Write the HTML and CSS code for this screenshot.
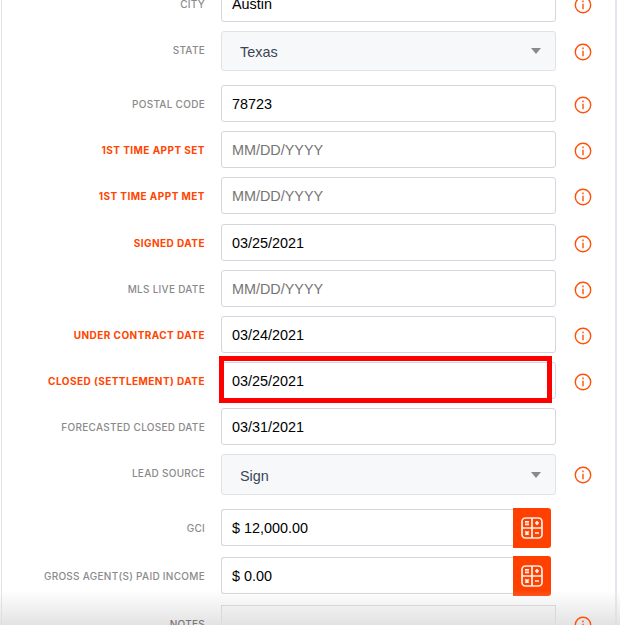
FILE: index.html
```html
<!DOCTYPE html>
<html>
<head>
<title>Transaction details</title>
<link rel="stylesheet" href="styles.css">
</head>
<body>

<div class="panel">
<form class="fields">

	<div class="row">
		<label class="name">City</label>
		<div class="field"><input class="text" value="Austin"></div>
		<span class="info"><svg viewBox="0 0 18 18"><circle cx="9" cy="9" r="7.7"/><path d="M9 7.8v5.4"/><path d="M9 4.6v1.7"/></svg></span>
	</div>

	<div class="row row-select">
		<label class="name">State</label>
		<div class="field"><div class="select">Texas<i class="caret"></i></div></div>
		<span class="info"><svg viewBox="0 0 18 18"><circle cx="9" cy="9" r="7.7"/><path d="M9 7.8v5.4"/><path d="M9 4.6v1.7"/></svg></span>
	</div>

	<div class="row">
		<label class="name">Postal Code</label>
		<div class="field"><input class="text" value="78723"></div>
		<span class="info"><svg viewBox="0 0 18 18"><circle cx="9" cy="9" r="7.7"/><path d="M9 7.8v5.4"/><path d="M9 4.6v1.7"/></svg></span>
	</div>

	<div class="row">
		<label class="name required">1st Time Appt Set</label>
		<div class="field"><input class="text" placeholder="MM/DD/YYYY"></div>
		<span class="info"><svg viewBox="0 0 18 18"><circle cx="9" cy="9" r="7.7"/><path d="M9 7.8v5.4"/><path d="M9 4.6v1.7"/></svg></span>
	</div>

	<div class="row row-met">
		<label class="name required">1st Time Appt Met</label>
		<div class="field"><input class="text" placeholder="MM/DD/YYYY"></div>
		<span class="info"><svg viewBox="0 0 18 18"><circle cx="9" cy="9" r="7.7"/><path d="M9 7.8v5.4"/><path d="M9 4.6v1.7"/></svg></span>
	</div>

	<div class="row">
		<label class="name required">Signed Date</label>
		<div class="field"><input class="text" value="03/25/2021"></div>
		<span class="info"><svg viewBox="0 0 18 18"><circle cx="9" cy="9" r="7.7"/><path d="M9 7.8v5.4"/><path d="M9 4.6v1.7"/></svg></span>
	</div>

	<div class="row">
		<label class="name">MLS Live Date</label>
		<div class="field"><input class="text" placeholder="MM/DD/YYYY"></div>
		<span class="info"><svg viewBox="0 0 18 18"><circle cx="9" cy="9" r="7.7"/><path d="M9 7.8v5.4"/><path d="M9 4.6v1.7"/></svg></span>
	</div>

	<div class="row">
		<label class="name required">Under Contract Date</label>
		<div class="field"><input class="text" value="03/24/2021"></div>
		<span class="info"><svg viewBox="0 0 18 18"><circle cx="9" cy="9" r="7.7"/><path d="M9 7.8v5.4"/><path d="M9 4.6v1.7"/></svg></span>
	</div>

	<div class="row">
		<label class="name required">Closed (Settlement) Date</label>
		<div class="field highlighted"><input class="text" value="03/25/2021"></div>
		<span class="info"><svg viewBox="0 0 18 18"><circle cx="9" cy="9" r="7.7"/><path d="M9 7.8v5.4"/><path d="M9 4.6v1.7"/></svg></span>
	</div>

	<div class="row">
		<label class="name">Forecasted Closed Date</label>
		<div class="field"><input class="text" value="03/31/2021"></div>
	</div>

	<div class="row row-select row-lead">
		<label class="name">Lead Source</label>
		<div class="field"><div class="select">Sign<i class="caret"></i></div></div>
		<span class="info"><svg viewBox="0 0 18 18"><circle cx="9" cy="9" r="7.7"/><path d="M9 7.8v5.4"/><path d="M9 4.6v1.7"/></svg></span>
	</div>

	<div class="row row-money">
		<label class="name">GCI</label>
		<div class="field money">
			<input class="text" value="$ 12,000.00">
			<button class="calc" type="button"><svg viewBox="0 0 22 22"><rect x="1" y="1" width="20" height="20" rx="3.5"/><path d="M11 1v20M1 11h20"/><path d="M4 4.9h4M4 7.3h4M14 6h4M16 4v4M14 16h4M4.3 14.3l3.4 3.4M7.7 14.3l-3.4 3.4"/></svg></button>
		</div>
	</div>

	<div class="row row-money">
		<label class="name">Gross Agent(s) Paid Income</label>
		<div class="field money">
			<input class="text" value="$ 0.00">
			<button class="calc" type="button"><svg viewBox="0 0 22 22"><rect x="1" y="1" width="20" height="20" rx="3.5"/><path d="M11 1v20M1 11h20"/><path d="M4 4.9h4M4 7.3h4M14 6h4M16 4v4M14 16h4M4.3 14.3l3.4 3.4M7.7 14.3l-3.4 3.4"/></svg></button>
		</div>
	</div>

	<div class="row row-notes">
		<label class="name">Notes</label>
		<div class="field"><div class="notes"></div></div>
		<span class="info"><svg viewBox="0 0 18 18"><circle cx="9" cy="9" r="7.7"/><path d="M9 7.8v5.4"/><path d="M9 4.6v1.7"/></svg></span>
	</div>

</form>
</div>
<div class="fade"></div>

</body>
</html>
```

FILE: styles.css
```css
html, body {
	margin: 0;
	height: 100%;
	overflow: hidden;
	background: #fff;
}

body {
	position: relative;
	font-family: 'Liberation Sans', Arial, sans-serif;
}

.panel {
	box-sizing: border-box;
	width: 616px;
	height: 625px;
	margin-left: 1px;
	border-left: 1px solid #e0e2e8;
	border-right: 2px solid #e6e7ee;
	overflow: hidden;
}

.fields {
	display: flex;
	flex-direction: column;
	gap: 9px;
	margin-top: -15px;
}

.row {
	flex: none;
	display: flex;
	align-items: center;
	height: 37px;
}

.row-select {
	height: 40px;
	margin-bottom: 5px;
}

.row-lead {
	height: 41px;
}

.row-met {
	margin-bottom: 1px;
}

.row-money {
	margin-bottom: 2px;
}

.name {
	box-sizing: border-box;
	width: 203px;
	font-family: Inter, 'Liberation Sans', sans-serif;
	font-size: 10px;
	font-weight: 500;
	letter-spacing: 0.28px;
	text-transform: uppercase;
	text-align: right;
	color: #8a8a8a;
}

.row-select .name {
	margin-bottom: 2px;
}

.row-lead .name {
	margin-bottom: 3px;
}

.name.required {
	font-weight: 700;
	letter-spacing: 0.45px;
	color: #ff4500;
}

.field {
	position: relative;
	display: flex;
	align-self: stretch;
	width: 335px;
	margin-left: 16px;
}

.text {
	flex: 1;
	min-width: 0;
	box-sizing: border-box;
	height: 100%;
	padding: 1px 10px 0;
	border: 1px solid #d3d6dc;
	border-radius: 3px;
	background: #fff;
	font-family: 'Liberation Sans', Arial, sans-serif;
	font-size: 14.4px;
	color: #000;
	outline: none;
}

.text::placeholder {
	color: #757575;
	opacity: 1;
}

.select {
	flex: 1;
	display: flex;
	align-items: center;
	justify-content: space-between;
	padding: 2px 14px 0 18px;
	border: 1px solid #e0e2e6;
	border-radius: 3px;
	background: #f7f8fa;
	font-size: 14.4px;
	color: #3a4556;
}

.caret {
	margin-top: -2px;
	border-left: 5.5px solid transparent;
	border-right: 5.5px solid transparent;
	border-top: 6px solid #8a8a8a;
}

.notes {
	flex: 1;
	height: 60px;
	border: 1px solid #cfd1d6;
	background: #fbfbfb;
}

.money {
	width: 330px;
}

.money .text {
	border-right: none;
	border-radius: 3px 0 0 3px;
}

.calc {
	flex: none;
	width: 38px;
	margin: -1px 0 -2px;
	padding: 0;
	border: none;
	border-radius: 0 3px 3px 0;
	background: #ff4000;
	display: flex;
	align-items: center;
	justify-content: center;
}

.calc svg {
	width: 22px;
	height: 22px;
	fill: none;
	stroke: #fff0e8;
	stroke-width: 1.7;
}

.info {
	display: block;
	width: 18px;
	height: 18px;
	margin: 2px 0 0 18px;
}

.row-lead .info {
	margin-top: 0;
}

.info svg {
	display: block;
	width: 18px;
	height: 18px;
	fill: none;
	stroke: #ff5008;
	stroke-width: 1.4;
}

/* the last row stays readable through the fade */
.row-notes .name,
.row-notes .info {
	position: relative;
	z-index: 1;
}

.row-notes .name {
	color: #777;
}

.highlighted::after {
	content: "";
	position: absolute;
	left: -2px;
	right: 4px;
	top: -6px;
	bottom: -4px;
	border: 5px solid #fe0000;
}

.fade {
	position: absolute;
	left: 0;
	right: 0;
	bottom: 0;
	height: 35px;
	background: linear-gradient(to bottom, rgba(222, 222, 222, 0), rgba(222, 222, 222, 0.85));
	pointer-events: none;
}
```
